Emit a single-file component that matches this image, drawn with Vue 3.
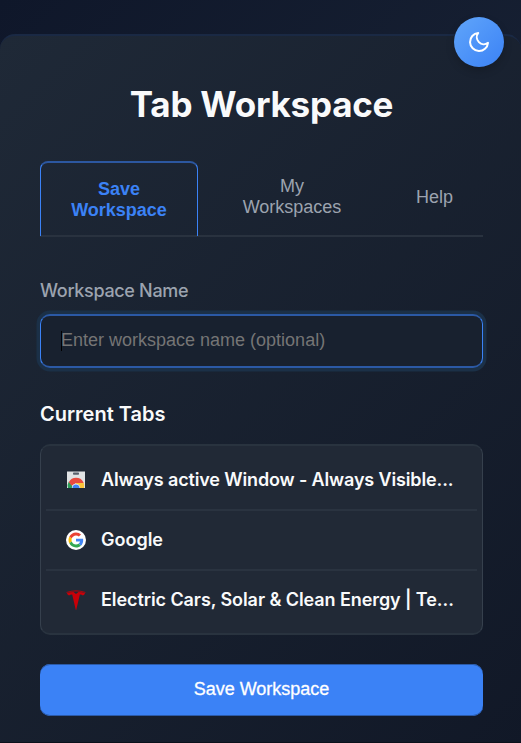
<script setup>
import { ref } from 'vue'

const activeTab = ref('save')
const workspaceName = ref('')
const tabs = [
  { id: 'save', label: 'Save Workspace' },
  { id: 'mine', label: 'My Workspaces' },
  { id: 'help', label: 'Help' },
]
const openTabs = [
  { icon: 'store', title: 'Always active Window - Always Visible...' },
  { icon: 'google', title: 'Google' },
  { icon: 'tesla', title: 'Electric Cars, Solar & Clean Energy | Te...' },
]
</script>

<template>
  <div class="page">
    <button class="theme-toggle" aria-label="Toggle theme">
      <svg viewBox="0 0 24 24" width="24" height="24" fill="none" stroke="#fff" stroke-width="2" stroke-linecap="round" stroke-linejoin="round">
        <path d="M21 12.79A9 9 0 1 1 11.21 3 7 7 0 0 0 21 12.79z" />
      </svg>
    </button>
    <main class="card">
      <h1>Tab Workspace</h1>
      <nav class="tabs">
        <button
          v-for="tab in tabs"
          :key="tab.id"
          class="tab"
          :class="['tab-' + tab.id, { active: activeTab === tab.id }]"
          @click="activeTab = tab.id"
        >{{ tab.label }}</button>
      </nav>
      <label class="label" for="name">Workspace Name</label>
      <div class="field">
        <span class="caret"></span>
        <input id="name" v-model="workspaceName" placeholder="Enter workspace name (optional)" />
      </div>
      <h2>Current Tabs</h2>
      <ul class="list">
        <li v-for="item in openTabs" :key="item.title" class="row">
          <svg v-if="item.icon === 'store'" class="icon" viewBox="0 0 20 20">
            <path d="M1 1.500h18V18H1z" fill="#e1e3e5" />
            <rect x="7" y="2.500" width="6" height="2.200" rx=".7" fill="#59616c" />
            <path d="M2 18a8.300 8.300 0 0 1 .8-6.500L8 18z" fill="#2d9d58" />
            <path d="M10 12.500h7.600A8.300 8.300 0 0 1 18 18h-8z" fill="#fbc43a" />
            <path d="M2.800 12.200a8.300 8.300 0 0 1 14.600 0v.8H10l-4.200 2.700z" fill="#e94b3f" />
            <path d="M5.800 18a4.200 4.200 0 0 1 8.400 0z" fill="#e8eefa" />
            <path d="M6.500 18a3.500 3.500 0 0 1 7 0z" fill="#4285f4" />
          </svg>
          <svg v-else-if="item.icon === 'google'" class="icon" viewBox="0 0 20 20">
            <circle cx="10" cy="10" r="10" fill="#fff" />
            <g transform="translate(2.5 2.5) scale(.3125)">
              <path fill="#ea4335" d="M24 9.500c3.540 0 6.710 1.220 9.210 3.600l6.850-6.850C35.900 2.380 30.470 0 24 0 14.620 0 6.510 5.380 2.560 13.220l7.980 6.190C12.430 13.720 17.740 9.500 24 9.500z" />
              <path fill="#4285f4" d="M46.980 24.550c0-1.570-.15-3.090-.38-4.550H24v9.020h12.940c-.58 2.960-2.260 5.480-4.780 7.180l7.730 6c4.510-4.180 7.090-10.360 7.090-17.650z" />
              <path fill="#fbbc05" d="M10.530 28.590A14.500 14.500 0 0 1 9.770 24c0-1.600.27-3.140.76-4.590l-7.980-6.190A24 24 0 0 0 0 24c0 3.880.92 7.540 2.560 10.780z" />
              <path fill="#34a853" d="M24 48c6.480 0 11.930-2.130 15.890-5.810l-7.730-6c-2.150 1.450-4.920 2.300-8.160 2.300-6.260 0-11.570-4.220-13.470-9.910l-7.980 6.190C6.510 42.620 14.620 48 24 48z" />
            </g>
          </svg>
          <svg v-else class="icon" viewBox="0 0 20 20" fill="#c90008">
            <path d="M.4 1.900Q10-1.500 19.600 1.900l-.3 1Q10 .1.700 2.900z" opacity=".8" />
            <path d="M.9 3.200Q4 2 7.500 2L10 4l2.500-2q3.500 0 6.600 1.200-.8 2-2.200 2.200-1.200-1-3-.9L10.200 20h-.4L6.200 4.500q-1.900-.1-3.100.9Q1.700 5.200.9 3.200z" />
          </svg>
          <span class="title" :class="item.icon">{{ item.title }}</span>
        </li>
      </ul>
      <button class="submit">Save Workspace</button>
    </main>
  </div>
</template>

<style>
body {
  margin: 0;
  background: #0f172a;
}
</style>

<style scoped>
* {
  box-sizing: border-box;
}
.page {
  position: relative;
  height: 743px;
  padding-top: 34px;
  overflow: hidden;
  background: linear-gradient(135deg, #0f172a, #1e293b);
  border-bottom: 1px solid #0b111b;
  font-family: Inter, sans-serif;
  color: #f9fafb;
}
.card {
  height: 720px;
  padding: 48px 38px 0 40px;
  border-top: 2px solid #1a2944;
  border-radius: 15px 15px 0 0;
  background: linear-gradient(135deg, #1f2937, #111827);
}
.theme-toggle {
  position: absolute;
  top: 17px;
  right: 17px;
  width: 50px;
  height: 50px;
  padding: 0;
  display: flex;
  align-items: center;
  justify-content: center;
  border: 0;
  border-radius: 50%;
  background: linear-gradient(135deg, #60a5fa, #3b82f6);
  box-shadow: 0 4px 8px rgba(0, 0, 0, .18);
}
h1 {
  margin: 0;
  height: 77px;
  font-size: 35px;
  line-height: 40px;
  font-weight: 700;
  letter-spacing: -.22px;
  text-align: center;
}
.tabs {
  display: flex;
  height: 76px;
  border-bottom: 2px solid #29323f;
}
.tab {
  height: 75px;
  padding: 0 28px 4px;
  border: 1px solid transparent;
  border-bottom: 0;
  background: none;
  color: #9ca3af;
  font: 500 18px/21px "Liberation Sans", Arial, sans-serif;
}
.tab-save {
  width: 158px;
}
.tab-mine {
  width: 188px;
  padding-left: 30px;
  padding-right: 30px;
}
.tab-help {
  width: 97px;
}
.tab.active {
  padding-bottom: 0;
  border-color: #3b82f6;
  border-top: 2px solid #2c57a0;
  border-radius: 8px 8px 0 0;
  color: #3b82f6;
  font-weight: 700;
}
.label {
  display: block;
  margin-top: 40px;
  height: 37px;
  font-size: 18px;
  line-height: 27px;
  font-weight: 500;
  letter-spacing: -.32px;
  color: #9ca3af;
}
.field {
  display: flex;
  align-items: center;
  height: 54px;
  padding: 0 20px 1px;
  border: 1px solid #3b82f6;
  border-width: 2px 1px;
  border-top-color: #2b59a5;
  border-bottom-color: #2b59a5;
  border-radius: 10px;
  background: #18212f;
  box-shadow: 0 0 0 3.5px #1b3047;
}
.caret {
  width: 1px;
  height: 20px;
  margin-right: -1px;
  background: #000;
}
input {
  flex: 1;
  min-width: 0;
  padding: 0;
  border: 0;
  outline: 0;
  background: none;
  color: #f9fafb;
  font: 18px "Liberation Sans", Arial, sans-serif;
}
input::placeholder {
  color: #757575;
}
h2 {
  margin: 32px 0 0;
  height: 44px;
  font-size: 20px;
  line-height: 28px;
  font-weight: 600;
}
.list {
  margin: 0;
  padding: 4px 5px;
  height: 191px;
  list-style: none;
  border: 1px solid #36404d;
  border-width: 2px 1px;
  border-top-color: #29333f;
  border-bottom-color: #29333f;
  border-radius: 10px;
  background: #212936;
}
.row {
  display: flex;
  align-items: center;
  gap: 15px;
  height: 60px;
  padding: 0 20px;
  border-bottom: 2px solid #2a3340;
}
.row:first-child {
  height: 61px;
}
.row:last-child {
  height: 58px;
  border-bottom: 0;
}
.icon {
  flex: none;
  width: 20px;
  height: 20px;
}
.title {
  font-size: 18px;
  line-height: 28px;
  font-weight: 600;
  white-space: nowrap;
}
.title.store {
  letter-spacing: -.14px;
}
.title.tesla {
  letter-spacing: -.08px;
}
.submit {
  display: block;
  width: 100%;
  height: 52px;
  margin-top: 29px;
  padding: 0 0 1px;
  border: 0;
  border-radius: 10px;
  background: #3b82f6;
  box-shadow: inset 0 1px #2b5aa8, inset 0 -1px #2b5aa8;
  color: #fff;
  font: 500 18px "Liberation Sans", Arial, sans-serif;
  -webkit-text-stroke: .3px #fff;
}
</style>
